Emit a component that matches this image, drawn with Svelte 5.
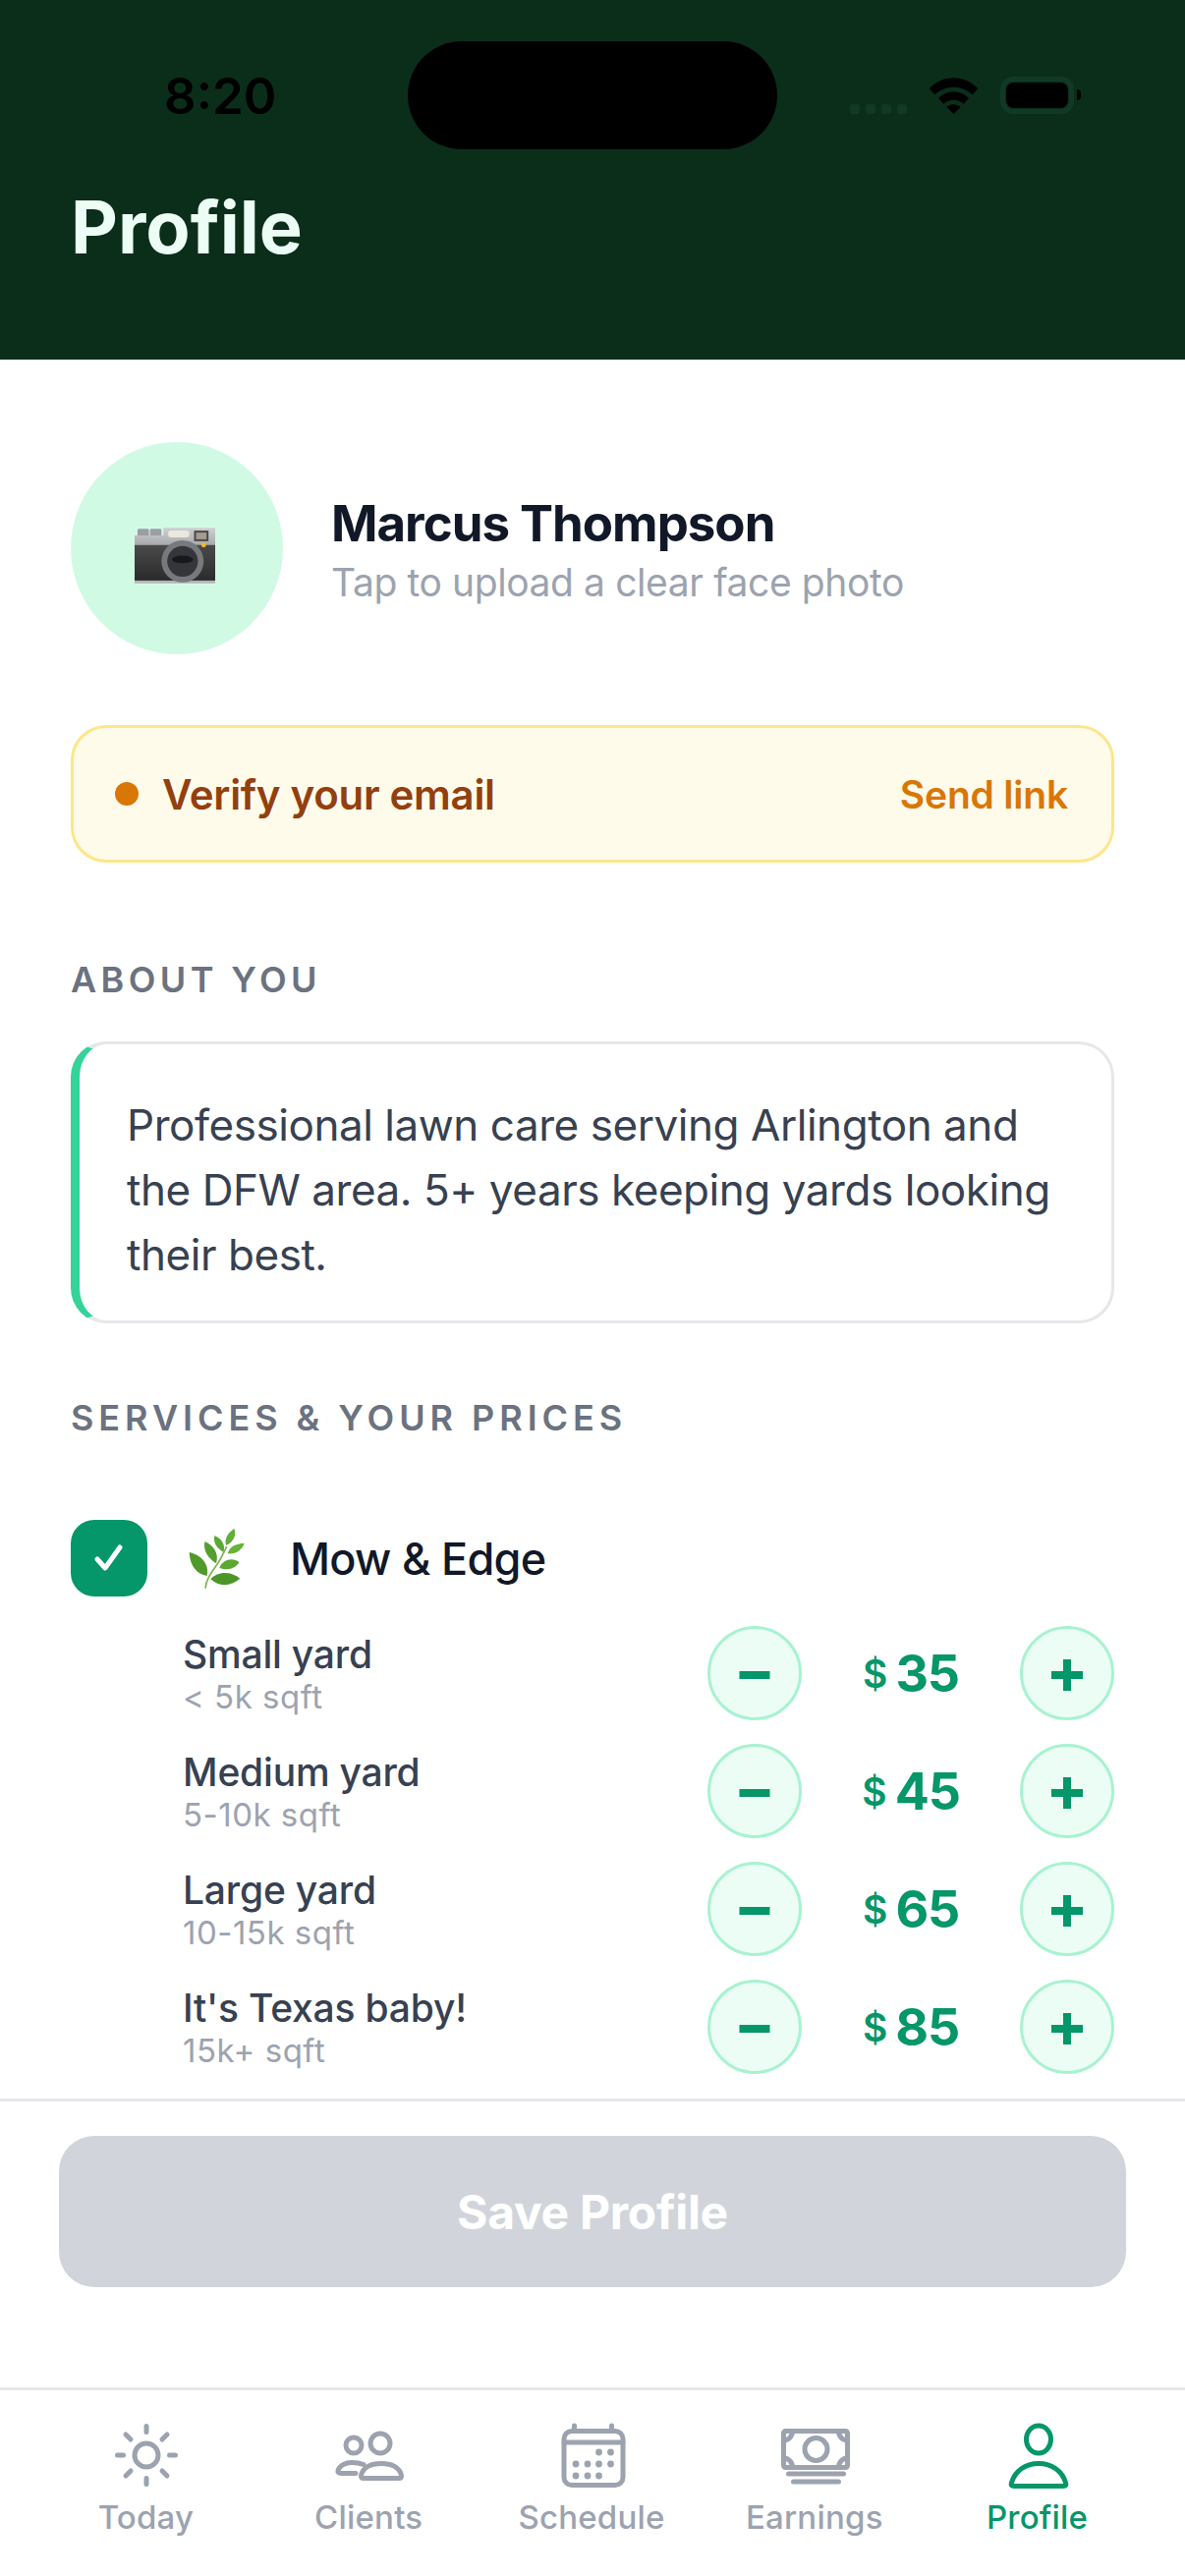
<script>
  const tiers = [
    { name: 'Small yard', size: '< 5k sqft', price: 35 },
    { name: 'Medium yard', size: '5-10k sqft', price: 45 },
    { name: 'Large yard', size: '10-15k sqft', price: 65 },
    { name: "It's Texas baby!", size: '15k+ sqft', price: 85 },
  ]
  const tabs = ['Today', 'Clients', 'Schedule', 'Earnings', 'Profile']
</script>

<div class="screen">
  <header class="top">
    <div class="status">
      <span class="time">8:20</span>
      <div class="island"></div>
      <div class="status-icons">
        <div class="signal"><i></i><i></i><i></i><i></i></div>
        <svg class="wifi" width="51" height="37" viewBox="0 0 51 38" aria-hidden="true">
          <path d="M0 11.5C14-3.5 37-3.5 51 11.5l-6 6.5C34 7.5 17 7.5 6 18ZM9.500 21.500c9-9 23-9 32 0l-5.500 6c-6-5.500-15-5.500-21 0ZM18 30.500c4.500-3.500 10.500-3.500 15 0L25.500 38Z" fill="#000"/>
        </svg>
        <div class="battery"><div class="battery-fill"></div></div>
        <div class="battery-cap"></div>
      </div>
    </div>
    <h1>Profile</h1>
  </header>

  <main class="content">
    <section class="person">
      <div class="avatar">
        <svg width="82" height="57" viewBox="0 0 84 58" aria-hidden="true">
          <defs>
            <linearGradient id="cam-top" x1="0" y1="0" x2="0" y2="1">
              <stop offset="0" stop-color="#cfd0d2"/>
              <stop offset="1" stop-color="#a3a5a8"/>
            </linearGradient>
            <linearGradient id="cam-body" x1="0" y1="0" x2="0" y2="1">
              <stop offset="0" stop-color="#4a4a4b"/>
              <stop offset="1" stop-color="#2a2a2b"/>
            </linearGradient>
          </defs>
          <rect x="3" y="1" width="12" height="10" rx="1.5" fill="#9b9ea2"/>
          <rect x="16" y="1" width="12" height="10" rx="1.5" fill="#9b9ea2"/>
          <path d="M0 8h30V0h54v20H0Z" fill="url(#cam-top)"/>
          <rect x="35" y="3" width="22" height="7" rx="3" fill="#ece8dc"/>
          <rect x="62" y="3" width="15" height="11" fill="#4b4744"/>
          <rect x="64" y="5" width="11" height="7" fill="#a39a90"/>
          <rect y="18" width="84" height="38" fill="url(#cam-body)"/>
          <rect y="55" width="84" height="3" fill="#b4b6b9"/>
          <circle cx="50" cy="35" r="22" fill="#77797c"/>
          <circle cx="50" cy="35" r="16" fill="#35363a"/>
          <ellipse cx="50" cy="33" rx="11" ry="4" fill="#17181a"/>
          <circle cx="72" cy="18" r="2.5" fill="#f2b92d"/>
        </svg>
      </div>
      <div class="person-text">
        <div class="name">Marcus Thompson</div>
        <div class="hint">Tap to upload a clear face photo</div>
      </div>
    </section>

    <div class="verify">
      <span class="dot"></span>
      <span class="verify-text">Verify your email</span>
      <span class="send">Send link</span>
    </div>

    <h2 class="about-title">ABOUT YOU</h2>
    <p class="bio">Professional lawn care serving Arlington and the DFW area. 5+ years keeping yards looking their best.</p>

    <h2 class="services-title">SERVICES &amp; YOUR PRICES</h2>

    <div class="service">
      <div class="check">
        <svg width="30" height="30" viewBox="0 0 30 30" fill="none" aria-hidden="true">
          <path d="M3 16l8 9L26 4" stroke="#fff" stroke-width="5" stroke-linecap="round" stroke-linejoin="round"/>
        </svg>
      </div>
      <svg class="leaf" width="60" height="65" viewBox="60 40 180 195" aria-hidden="true">
        <path d="M117 228C120 190 150 165 165 135S178 110 182 100" fill="none" stroke="#7cb648" stroke-width="5"/>
        <path d="M122 190C90 185 70 160 68 118 100 125 130 150 122 190Z" fill="#4e9a2b"/>
        <path d="M150 152C125 135 110 115 115 85 140 95 160 120 150 152Z" fill="#559f2e"/>
        <path d="M172 118C152 105 140 90 145 67 165 75 180 95 172 118Z" fill="#5ba834"/>
        <path d="M180 97C175 75 185 60 205 45 212 65 205 85 180 97Z" fill="#62ae38"/>
        <path d="M185 122C190 100 210 92 236 90 230 110 210 125 185 122Z" fill="#66b23a"/>
        <path d="M160 165C170 140 200 132 220 148 210 168 185 175 160 165Z" fill="#5ba834"/>
        <path d="M133 200C155 175 195 175 223 198 195 222 160 225 133 200Z" fill="#4c9629"/>
      </svg>
      <span class="service-name">Mow &amp; Edge</span>
    </div>

    <div class="tiers">
      {#each tiers as tier}
        <div class="tier">
          <div class="tier-info">
            <div class="tier-name">{tier.name}</div>
            <div class="tier-size">{tier.size}</div>
          </div>
          <div class="stepper">
            <button type="button" class="step" aria-label="Decrease">
              <svg width="34" height="34" viewBox="0 0 34 34" aria-hidden="true"><path d="M1.500 17h31" stroke="#059669" stroke-width="8"/></svg>
            </button>
            <div class="price"><span class="cur">$</span><span class="amount">{tier.price}</span></div>
            <button type="button" class="step" aria-label="Increase">
              <svg width="34" height="34" viewBox="0 0 34 34" aria-hidden="true"><path d="M1 17h32M17 1v32" stroke="#059669" stroke-width="8"/></svg>
            </button>
          </div>
        </div>
      {/each}
    </div>
  </main>

  <div class="save-bar">
    <button type="button" class="save">Save Profile</button>
  </div>

  <nav class="tabbar">
    {#each tabs as tab, i}
      <div class="tab" class:active={tab === 'Profile'}>
        <svg width="78" height="78" viewBox="0 0 78 78" fill="none" stroke="currentColor" stroke-width="5" stroke-linecap="round" stroke-linejoin="round" aria-hidden="true">
          {#if i === 0}
            <circle cx="39" cy="39" r="12"/>
            <path d="M39 9.500v6M39 62.500v6M9.500 39h6M62.500 39h6M18 18l5 5M55 55l5 5M18 60l5-5M55 23l5-5"/>
          {:else if i === 1}
            <circle cx="50" cy="27" r="10"/>
            <circle cx="23" cy="29" r="8"/>
            <path d="M25 57.500H10c-2 0-3.500-1-3-3 1.500-5 8-8 14-8 4 0 8 .5 12 2"/>
            <path d="M33 62.500h36c2 0 3-1 2.500-3-2-8-10-12-20.500-12s-18.500 4-20.500 12c-.5 2 .5 3 2.500 3Z"/>
          {:else if i === 2}
            <rect x="10" y="14.500" width="60" height="55" rx="8"/>
            <path d="M10 26h60M20.500 9v5M58.500 9v5"/>
            <g fill="currentColor" stroke="none">
              <circle cx="45.500" cy="36" r="3.400"/><circle cx="57.500" cy="36" r="3.400"/>
              <circle cx="22" cy="48" r="3.400"/><circle cx="34" cy="48" r="3.400"/><circle cx="45.500" cy="48" r="3.400"/><circle cx="57.500" cy="48" r="3.400"/>
              <circle cx="22" cy="60" r="3.400"/><circle cx="34" cy="60" r="3.400"/><circle cx="45.500" cy="60" r="3.400"/>
            </g>
          {:else if i === 3}
            <rect x="6.500" y="14.500" width="65" height="37" rx="2"/>
            <circle cx="39.500" cy="33" r="11.500"/>
            <path d="M6.500 24c5 0 9-4 9-9.500M71.500 24c-5 0-9-4-9-9.500M6.500 42c5 0 9 4 9 9.500M71.500 42c-5 0-9 4-9 9.500"/>
            <path d="M11.500 58h56M16.500 66h46"/>
          {:else}
            <ellipse cx="39" cy="23" rx="12.500" ry="14"/>
            <path d="M14 70.500c-2.500 0-3.500-1-2.500-3.500 3.500-12 14-19.500 27.500-19.500s24 7.500 27.500 19.500c1 2.500 0 3.500-2.500 3.500Z"/>
          {/if}
        </svg>
        <span class="tab-label">{tab}</span>
      </div>
    {/each}
  </nav>
</div>

<style>
  :global(body) {
    margin: 0;
    background: #fff;
  }

  .screen {
    width: 1206px;
    height: 2622px;
    display: flex;
    flex-direction: column;
    overflow: hidden;
    font-family: Inter, "Liberation Sans", sans-serif;
    background: #fff;
  }

  .top {
    height: 366px;
    flex-shrink: 0;
    background: #0b2e1b;
    box-sizing: border-box;
    padding: 42px 72px 0;
  }

  .status {
    position: relative;
    height: 110px;
  }
  .time {
    position: absolute;
    left: 95px;
    top: 26px;
    font-size: 51px;
    line-height: 60px;
    font-weight: 600;
    color: #000;
  }
  .island {
    position: absolute;
    left: 343px;
    top: 0;
    width: 376px;
    height: 110px;
    border-radius: 55px;
    background: #000;
  }
  .status-icons {
    position: absolute;
    left: 793px;
    top: 36px;
    display: flex;
    align-items: flex-end;
    height: 38px;
  }
  .signal {
    display: flex;
    gap: 6px;
    margin-right: 22px;
  }
  .signal i {
    width: 10px;
    height: 10px;
    border-radius: 3px;
    background: #103a25;
  }
  .wifi {
    margin-right: 22px;
  }
  .battery {
    box-sizing: border-box;
    width: 75px;
    height: 38px;
    border: 5px solid #103a25;
    border-radius: 13px;
    padding: 1px;
  }
  .battery-fill {
    width: 100%;
    height: 100%;
    background: #000;
    border-radius: 8px;
  }
  .battery-cap {
    width: 4px;
    height: 11px;
    margin: 0 0 14px 3px;
    background: #000;
    border-radius: 0 4px 4px 0;
  }

  h1 {
    margin: 35px 0 0;
    font-size: 74px;
    line-height: 88px;
    font-weight: 700;
    color: #ecfdf5;
  }

  .content {
    flex: 1;
    min-height: 0;
    overflow: hidden;
    box-sizing: border-box;
    padding: 84px 72px 0;
  }

  .person {
    display: flex;
    align-items: center;
    gap: 49px;
  }
  .avatar {
    width: 216px;
    height: 216px;
    box-sizing: border-box;
    padding: 14px 4px 0 0;
    border-radius: 50%;
    background: #d1fae5;
    display: flex;
    align-items: center;
    justify-content: center;
    flex-shrink: 0;
  }
  .name {
    margin-top: 3px;
    font-size: 51px;
    line-height: 62px;
    font-weight: 700;
    letter-spacing: -1px;
    color: #111827;
  }
  .hint {
    margin-top: 5px;
    font-size: 39px;
    line-height: 48px;
    letter-spacing: -0.4px;
    color: #9ca3af;
  }

  .verify {
    margin-top: 72px;
    height: 140px;
    box-sizing: border-box;
    border: 3px solid #fde68a;
    border-radius: 36px;
    background: #fffbeb;
    display: flex;
    align-items: center;
    padding: 0 44px 0 42px;
  }
  .dot {
    width: 24px;
    height: 24px;
    border-radius: 50%;
    background: #d97706;
    margin-right: 24px;
  }
  .verify-text {
    flex: 1;
    font-size: 42px;
    font-weight: 600;
    letter-spacing: -0.3px;
    color: #92400e;
  }
  .send {
    font-size: 39px;
    font-weight: 600;
    letter-spacing: -0.2px;
    color: #d97706;
  }

  h2 {
    margin: 0;
    font-size: 36px;
    line-height: 44px;
    font-weight: 600;
    color: #6b7280;
  }
  .about-title {
    margin-top: 97px;
    letter-spacing: 4.4px;
  }
  .bio {
    margin: 41px 0 0;
    box-sizing: border-box;
    height: 287px;
    border: 3px solid #e5e7eb;
    border-left: 9px solid #34d399;
    border-radius: 36px;
    padding: 49px 48px 0;
    font-size: 44px;
    line-height: 66px;
    letter-spacing: -0.45px;
    color: #374151;
  }
  .services-title {
    margin-top: 74px;
    letter-spacing: 4.95px;
  }

  .service {
    margin-top: 82px;
    display: flex;
    align-items: center;
  }
  .check {
    width: 78px;
    height: 78px;
    border-radius: 24px;
    background: #059669;
    display: flex;
    align-items: center;
    justify-content: center;
    flex-shrink: 0;
  }
  .leaf {
    margin-left: 40px;
    flex-shrink: 0;
  }
  .service-name {
    margin-left: 45px;
    font-size: 45px;
    font-weight: 500;
    letter-spacing: -0.7px;
    color: #111827;
  }

  .tiers {
    margin-top: 30px;
    padding-left: 114px;
    display: flex;
    flex-direction: column;
    gap: 24px;
  }
  .tier {
    height: 96px;
    display: flex;
    align-items: center;
    justify-content: space-between;
  }
  .tier-name {
    font-size: 39px;
    line-height: 48px;
    font-weight: 500;
    letter-spacing: -0.2px;
    color: #374151;
  }
  .tier-size {
    font-size: 33px;
    line-height: 38px;
    letter-spacing: 0.5px;
    color: #9ca3af;
  }
  .stepper {
    display: flex;
    align-items: center;
  }
  .step {
    width: 96px;
    height: 96px;
    padding: 3px 0 0;
    border: 3px solid #a7f3d0;
    border-radius: 50%;
    background: #ecfdf5;
    display: flex;
    align-items: center;
    justify-content: center;
  }
  .price {
    width: 222px;
    display: flex;
    align-items: center;
    justify-content: center;
    gap: 8px;
    color: #059669;
    font-weight: 700;
  }
  .cur {
    font-size: 39px;
    font-weight: 600;
  }
  .amount {
    font-size: 52px;
    letter-spacing: -1.2px;
  }

  .save-bar {
    flex-shrink: 0;
    height: 294px;
    box-sizing: border-box;
    border-top: 3px solid #e5e7eb;
    padding: 35px 60px 0;
  }
  .save {
    width: 100%;
    height: 154px;
    border: none;
    border-radius: 36px;
    background: #d1d5db;
    color: #fff;
    font-family: inherit;
    font-size: 48px;
    font-weight: 700;
    letter-spacing: -0.3px;
  }

  .tabbar {
    flex-shrink: 0;
    height: 192px;
    box-sizing: border-box;
    border-top: 3px solid #e5e7eb;
    padding: 27px 36px 0;
    display: flex;
  }
  .tab {
    flex: 1;
    display: flex;
    flex-direction: column;
    align-items: center;
    color: #9ca3af;
  }
  .tab.active {
    color: #059669;
  }
  .tab-label {
    margin-top: 3px;
    margin-right: 2px;
    font-size: 33px;
    line-height: 42px;
    font-weight: 450;
    letter-spacing: 0.2px;
  }
</style>
